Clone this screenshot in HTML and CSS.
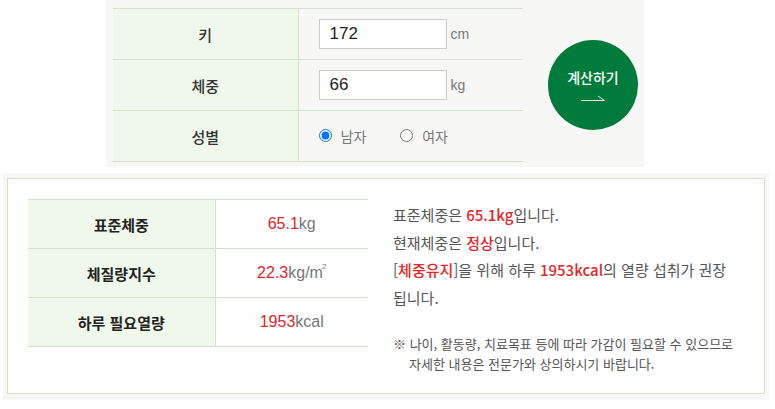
FILE: index.html
```html
<html lang="ko">
<head>
    <meta charset="utf-8">
    <title>표준체중 계산기</title>
    <link rel="stylesheet" href="styles.css">
</head>
<body>
<div class="calc">
    <table class="form-table">
        <tr>
            <th>키</th>
            <td><input class="num" type="text" value="172"><span class="unit">cm</span></td>
        </tr>
        <tr>
            <th>체중</th>
            <td><input class="num" type="text" value="66"><span class="unit">kg</span></td>
        </tr>
        <tr>
            <th>성별</th>
            <td>
                <label class="radio"><input type="radio" name="sex" checked> 남자</label>
                <label class="radio"><input type="radio" name="sex"> 여자</label>
            </td>
        </tr>
    </table>
    <button class="calc-btn" type="button">
        <span class="txt">계산하기</span>
        <svg class="arrow" width="24" height="8" viewBox="0 0 24 8">
            <path d="M0 7.5H23.5L17 3" fill="none" stroke="#ffffff" stroke-opacity="0.85" stroke-width="1"/>
        </svg>
    </button>
</div>

<div class="result">
    <div class="result-inner">
        <table class="res-table">
            <tr>
                <th>표준체중</th>
                <td><em>65.1</em>kg</td>
            </tr>
            <tr>
                <th>체질량지수</th>
                <td><em>22.3</em>kg/m<sup class="sq">2</sup></td>
            </tr>
            <tr>
                <th>하루 필요열량</th>
                <td><em>1953</em>kcal</td>
            </tr>
        </table>
        <div class="res-text">
            <p>표준체중은 <em>65.1kg</em>입니다.</p>
            <p>현재체중은 <em>정상</em>입니다.</p>
            <p>[<em>체중유지</em>]을 위해 하루 <em>1953kcal</em>의 열량 섭취가 권장 됩니다.</p>
            <p class="note">※ 나이, 활동량, 치료목표 등에 따라 가감이 필요할 수 있으므로 자세한 내용은 전문가와 상의하시기 바랍니다.</p>
        </div>
    </div>
</div>
</body>
</html>
```

FILE: styles.css
```css
*,
*:before,
*:after {
    margin: 0;
    padding: 0;
    box-sizing: border-box;
}

body {
    font-family: "Noto Sans CJK KR", "Noto Sans", sans-serif;
    color: #333;
    background: #ffffff;
}

/* 입력 영역 */
.calc {
    display: flex;
    align-items: center;
    width: 538px;
    margin-left: 106px;
    padding: 8px 6px 5px 7px;
    background: #f7f7f5;
}

.form-table {
    width: 410px;
    border-collapse: collapse;
}

.form-table th,
.form-table td {
    height: 51px;
    border-top: 1px solid #d4e2cc;
    border-bottom: 1px solid #d4e2cc;
}

.form-table th {
    width: 185px;
    background: #f0f8ec;
    border-right: 1px solid #d4e2cc;
    font-size: 15px;
    font-weight: 500;
    color: #333;
}

.form-table td {
    padding-left: 20px;
    font-size: 14px;
    color: #777;
}

.num {
    width: 128px;
    height: 30px;
    border: 1px solid #cccccc;
    padding: 0 10px;
    font-family: "Liberation Sans", Arial, sans-serif;
    font-size: 17px;
    color: #222;
    background: #ffffff;
    vertical-align: middle;
}

.unit {
    margin-left: 4px;
    font-family: "Liberation Sans", Arial, sans-serif;
    font-size: 14px;
    color: #777;
    vertical-align: middle;
}

.radio {
    display: inline-flex;
    align-items: center;
    margin-right: 30px;
    font-size: 14px;
    color: #777;
}

.radio input {
    width: 13px;
    height: 13px;
    margin: 0 9px 0 0;
}

.calc-btn {
    display: flex;
    flex-direction: column;
    align-items: center;
    justify-content: center;
    width: 90px;
    height: 90px;
    margin-left: 25px;
    border: 0;
    border-radius: 50%;
    background: #007b3c;
    color: #ffffff;
    font-family: inherit;
}

.calc-btn .txt {
    font-size: 14px;
    font-weight: 500;
    line-height: 18px;
    margin-top: -2px;
}

.calc-btn .arrow {
    margin-top: 7px;
}

/* 결과 영역 */
.result {
    width: 766px;
    margin: 6px 0 0 3px;
    padding: 5px 4px 6px 4px;
    background: #f7f7f5;
}

.result-inner {
    display: flex;
    align-items: flex-start;
    padding: 20px 20px 19px 20px;
    border: 1px solid #d4e2cc;
    background: #ffffff;
}

.res-table {
    width: 340px;
    flex: none;
    border-collapse: collapse;
}

.res-table th,
.res-table td {
    height: 49px;
    border-top: 1px solid #d4e2cc;
    border-bottom: 1px solid #d4e2cc;
    text-align: center;
}

.res-table th {
    width: 187px;
    background: #f0f8ec;
    border-right: 1px solid #d4e2cc;
    font-size: 15px;
    font-weight: 700;
    color: #222;
}

.res-table td {
    font-family: "Liberation Sans", Arial, sans-serif;
    font-size: 16px;
    color: #777;
}

.res-table .sq {
    font-size: 8px;
    vertical-align: 9px;
    margin-left: -1px;
    line-height: 0;
}

.res-table em,
.res-text em {
    font-style: normal;
    color: #e52528;
}

.res-text {
    flex: 1;
    margin: 2px 0 0 25px;
    font-size: 15px;
    line-height: 27.5px;
    color: #555;
}

.res-text em {
    font-weight: 500;
}

.res-text .note {
    margin-top: 23px;
    padding-left: 16px;
    text-indent: -16px;
    font-size: 13px;
    line-height: 20px;
    color: #555;
}
```
